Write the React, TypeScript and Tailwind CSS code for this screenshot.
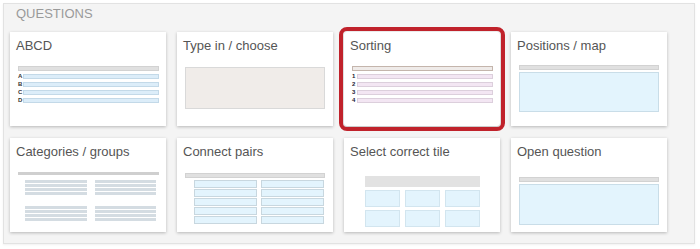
import React from 'react'

const bar = 'h-[5px] bg-[#e0e0e0] border border-[#d2d2d2]'

function AbcdPreview() {
  return (
    <div className="mx-[8px] mr-[7px] mt-[13px]">
      <div className={bar} />
      <div className="mt-[3px] flex flex-col gap-[3px]">
        {['A', 'B', 'C', 'D'].map(l => (
          <div key={l} className="flex items-center h-[5px]">
            <span className="w-[5px] text-[6px] leading-[5px] font-bold text-[#333]">{l}</span>
            <div className="flex-1 h-[5px] bg-[#dcedf9] border border-[#c3d9e8]" />
          </div>
        ))}
      </div>
    </div>
  )
}

function TypeInPreview() {
  return (
    <div className="mx-[8px] mt-[14px] h-[42px] bg-[#f0ece9] border border-[#d9d9d9]" />
  )
}

function SortingPreview() {
  return (
    <div className="mx-[8px] mr-[7px] mt-[13px]">
      <div className="h-[5px] bg-[#efebe9] border border-[#c4b5ac]" />
      <div className="mt-[3px] flex flex-col gap-[3px]">
        {['1', '2', '3', '4'].map(l => (
          <div key={l} className="flex items-center h-[5px]">
            <span className="w-[5px] text-[6px] leading-[5px] font-bold text-[#223]">{l}</span>
            <div className="flex-1 h-[5px] bg-[#f3e6f3] border border-[#dccfdc]" />
          </div>
        ))}
      </div>
    </div>
  )
}

function MapPreview() {
  return (
    <div className="mx-[8px] mt-[12px]">
      <div className={bar} />
      <div className="mt-[2px] h-[40px] bg-[#e3f4fd] border border-[#c9dde8]" />
    </div>
  )
}

function Stripes() {
  return (
    <div className="flex flex-col gap-[1px]">
      {[0, 1, 2, 3].map(i => (
        <div key={i} className="h-[3px] bg-[#d4dce2]" />
      ))}
    </div>
  )
}

function CategoriesPreview() {
  return (
    <div className="mx-[8px] mr-[7px] mt-[13px]">
      <div className="h-[3px] bg-[#cfcfcf]" />
      <div className="mt-[5px] ml-[7px] mr-[3px] grid grid-cols-2 gap-x-[8px] gap-y-[11px]">
        <Stripes />
        <Stripes />
        <Stripes />
        <Stripes />
      </div>
    </div>
  )
}

function PairsPreview() {
  return (
    <div className="ml-[8px] mr-[8px] mt-[14px]">
      <div className={bar} />
      <div className="mt-[2px] ml-[9px] mr-[1px] grid grid-cols-2 gap-x-[4px] gap-y-[1px]">
        {Array.from({ length: 10 }).map((_, i) => (
          <div key={i} className="h-[8px] bg-[#e3f4fd] border border-[#c8d7df]" />
        ))}
      </div>
    </div>
  )
}

function TilesPreview() {
  return (
    <div className="ml-[21px] w-[115px] mt-[17px]">
      <div className="h-[11px] bg-[#e2e2e2]" />
      <div className="mt-[3px] grid grid-cols-3 gap-x-[5px] gap-y-[3px]">
        {Array.from({ length: 6 }).map((_, i) => (
          <div key={i} className="h-[17px] bg-[#e3f4fd] border border-[#d2e5ef]" />
        ))}
      </div>
    </div>
  )
}

function OpenPreview() {
  return (
    <div className="mx-[8px] mt-[18px]">
      <div className={bar} />
      <div className="mt-[2px] h-[41px] bg-[#e3f4fd] border border-[#c9dde8]" />
    </div>
  )
}

const cards = [
  { title: 'ABCD', Preview: AbcdPreview },
  { title: 'Type in / choose', Preview: TypeInPreview },
  { title: 'Sorting', Preview: SortingPreview, selected: true },
  { title: 'Positions / map', Preview: MapPreview },
  { title: 'Categories / groups', Preview: CategoriesPreview },
  { title: 'Connect pairs', Preview: PairsPreview },
  { title: 'Select correct tile', Preview: TilesPreview },
  { title: 'Open question', Preview: OpenPreview },
]

export default function App() {
  return (
    <div className="w-[700px] h-[249px] bg-white pt-[3px] pl-[3px]" style={{ fontFamily: '"Liberation Sans", Arial, sans-serif' }}>
      <div className="w-[692px] h-[241px] border border-[#e2e2e2] bg-[#f4f4f4] pl-[6px] shadow-[0_1px_2px_rgba(0,0,0,0.06)]">
        <div className="pl-[6px] pt-[2px] mb-[11px] text-[13px] leading-[15px] text-[#9a9a9a]">QUESTIONS</div>
        <div className="grid grid-cols-[repeat(4,156px)] gap-x-[11px] gap-y-[12px]">
          {cards.map(({ title, Preview, selected }) => (
            <div
              key={title}
              className={
                selected
                  ? 'h-[94px] bg-white rounded-[3px] outline-[4px] outline-solid outline-offset-[1px] outline-[#c0222b] shadow-[0_1px_3px_rgba(0,0,0,0.25)]'
                  : 'h-[94px] bg-white shadow-[0_1px_3px_rgba(0,0,0,0.25)]'
              }
            >
              <div className="pl-[6px] pt-[6px] text-[13px] leading-[15px] text-[#555]">{title}</div>
              <Preview />
            </div>
          ))}
        </div>
      </div>
    </div>
  )
}
